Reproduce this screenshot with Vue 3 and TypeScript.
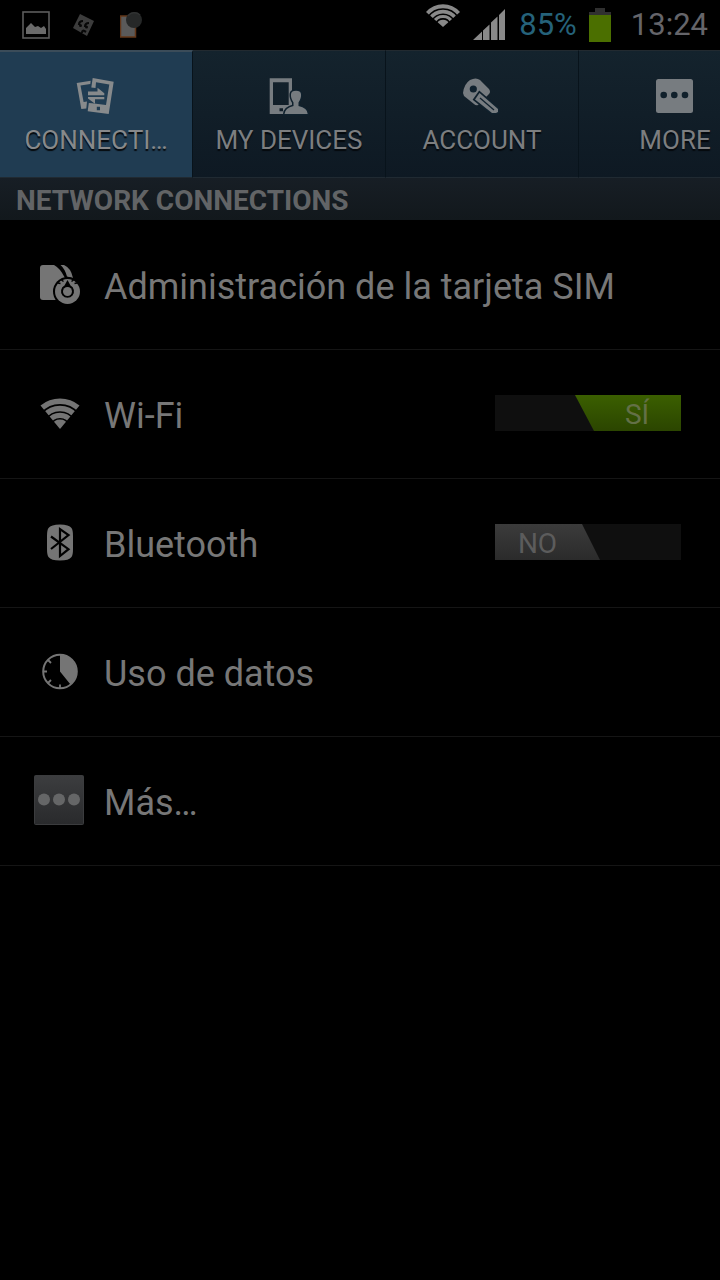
<script setup lang="ts">
import { ref } from 'vue'

type Icon = 'sim' | 'wifi' | 'bluetooth' | 'data' | 'more'
interface Setting {
  icon: Icon
  label: string
  toggle?: boolean
}

const tabs = [
  { id: 'connections', label: 'CONNECTI…' },
  { id: 'devices', label: 'MY DEVICES' },
  { id: 'account', label: 'ACCOUNT' },
  { id: 'more', label: 'MORE' },
]
const active = ref('connections')

const settings = ref<Setting[]>([
  { icon: 'sim', label: 'Administración de la tarjeta SIM' },
  { icon: 'wifi', label: 'Wi-Fi', toggle: true },
  { icon: 'bluetooth', label: 'Bluetooth', toggle: false },
  { icon: 'data', label: 'Uso de datos' },
  { icon: 'more', label: 'Más…' },
])
</script>

<template>
  <div class="screen">
    <header class="status">
      <div class="notes">
        <svg width="28" height="28" viewBox="0 0 28 28">
          <rect x="1" y="1" width="26" height="26" fill="none" stroke="#5c5c5c" stroke-width="1.6" />
          <path d="M4 23V17L9 12L13 16L16 15L19 17L22 15L24 18V23Z" fill="#6a6a6a" />
        </svg>
        <svg width="24" height="24" viewBox="0 0 24 24">
          <path d="M7 1L21 8L14 23L0 15Z" fill="#3c3c3c" />
          <path d="M10 8Q6 8 6 12M16 10Q12 10 12 14M9 20Q9 16 13 19" fill="none" stroke="#080808" stroke-width="2.2" />
          <circle cx="7.500" cy="12.500" r="1.500" fill="#080808" />
          <circle cx="13.500" cy="14" r="1.500" fill="#080808" />
        </svg>
        <svg width="24" height="28" viewBox="0 0 24 28">
          <rect x="0.500" y="5" width="15" height="21" fill="#5a5a5a" stroke="#633719" stroke-width="1.500" />
          <circle cx="14" cy="9" r="8" fill="#262828" />
          <path d="M8 5A8 8 0 0 1 20 4" fill="none" stroke="#303232" stroke-width="1.500" />
        </svg>
      </div>
      <svg class="status-wifi" width="36" height="24" viewBox="0 0 36 24">
        <path d="M18 23L1 8A22.600 22.600 0 0 1 35 8Z" fill="#898989" />
        <path d="M3 13A18 18 0 0 1 33 13M7 16.500A12.800 12.800 0 0 1 29 16.500M11 19.500A7.600 7.600 0 0 1 25 19.500" fill="none" stroke="#000" stroke-width="1.600" />
      </svg>
      <svg class="signal" width="33" height="32" viewBox="0 0 33 32">
        <path d="M0 31L9 22.500V31ZM10 31V21.500L16.500 15.500V31ZM18 31V13.500L24.500 7.500V31ZM26 31V6L32 0V31Z" fill="#898989" />
      </svg>
      <span class="percent">85%</span>
      <svg class="battery" width="24" height="36" viewBox="0 0 24 36">
        <path d="M7 1H17V5H23V9H1V5H7Z" fill="#303030" />
        <rect x="1" y="8" width="22" height="27" fill="#4b6f00" />
      </svg>
      <time>13:24</time>
    </header>

    <nav class="tabs" aria-label="Settings sections">
      <button
        v-for="tab in tabs"
        :key="tab.id"
        type="button"
        class="tab"
        :class="{ active: active === tab.id }"
        @click="active = tab.id"
      >
        <svg width="42" height="40" viewBox="0 0 42 40" aria-hidden="true">
          <template v-if="tab.id === 'connections'">
            <path d="M1.700 7L15.700 4.700L15.300 8L5.500 9.600L8.600 26L12 25.400L11.300 32.500L6.300 33Z" fill="#878a8c" />
            <path fill-rule="evenodd" d="M17.700 2L38.700 5.700L33.700 38L12.700 35.300L13.800 27L17 27.300L31 29L34.300 8.500L21 6.300L20.500 12L16.300 11.500ZM21.800 30.800V34.200H25V30.800Z" fill="#878a8c" />
            <path d="M13 15.500H22.500V11.700L29.300 17.300V19.200H13ZM13 21H29.300V23.300H20V27.700L13 22.500Z" fill="#878a8c" />
          </template>
          <template v-else-if="tab.id === 'devices'">
            <path fill-rule="evenodd" d="M1.700 2.300H24V38H1.700ZM5 6.300V29H20.700V6.300ZM11.500 32.200V35.200H15V32.200Z" fill="#777c80" />
            <path d="M25.500 26.500Q22.500 22 23 18Q23.500 14.700 28 14.700Q32.500 14.700 33 18Q33.500 22 30.500 26.500V30Q39.500 32 39.700 38H16.500Q17 32 25.500 30Z" fill="#777c80" stroke="#10212d" stroke-width="3" paint-order="stroke" />
          </template>
          <template v-else-if="tab.id === 'account'">
            <path d="M2 17Q3 8 9 4Q15 1 19 4L28 13Q30 16 28 18L17 29Q15 30 13 28L3 20Z" fill="#777c80" />
            <circle cx="12.300" cy="13" r="3.600" fill="#10212d" />
            <path d="M18.500 17L37 33V36L35 37H31L14 23.500Z" fill="#777c80" stroke="#10212d" stroke-width="3.500" paint-order="stroke" />
            <path d="M19 22L33 34" stroke="#10212d" stroke-width="1.300" />
          </template>
          <template v-else>
            <rect x="2" y="3" width="37" height="34" rx="2.500" fill="#777c80" />
            <g fill="#10202b"><circle cx="9.700" cy="19" r="3.300" /><circle cx="20.300" cy="19" r="3.300" /><circle cx="31" cy="19" r="3.300" /></g>
          </template>
        </svg>
        <span>{{ tab.label }}</span>
      </button>
    </nav>

    <main>
      <h2>NETWORK CONNECTIONS</h2>
      <ul>
        <li v-for="item in settings" :key="item.icon">
          <svg class="icon" width="52" height="52" viewBox="0 0 52 52" aria-hidden="true">
            <g v-if="item.icon === 'sim'" fill="#757575">
              <path d="M6 10Q6 7 9 7H20Q26 10 31 20V42H9Q6 42 6 39Z" />
              <path d="M26.500 7H30Q37 10 39 20L33 18.500Q31 11 26.500 7Z" />
              <circle cx="33.500" cy="33.500" r="14.500" fill="#000" />
              <circle cx="33.500" cy="33.500" r="12.500" />
              <path d="M24 25L26.500 25.500M27.500 22L29.500 23.500M39.500 22L37.500 23.500M43 25L40.500 25.500" fill="none" stroke="#000" stroke-width="1.500" />
              <path d="M33.500 22L36.500 27.600A6.500 6.500 0 1 1 30.500 27.600Z" fill="#000" />
              <circle cx="33.500" cy="33.500" r="4.500" />
            </g>
            <g v-else-if="item.icon === 'wifi'">
              <path d="M26 42L6.500 18.500A30.700 30.700 0 0 1 45.500 18.500Z" fill="#757575" />
              <path d="M8 26A24 24 0 0 1 44 26M12 32.500A16.800 16.800 0 0 1 40 32.500M17 38A9.600 9.600 0 0 1 35 38" fill="none" stroke="#000" stroke-width="1.600" />
            </g>
            <g v-else-if="item.icon === 'bluetooth'">
              <path d="M26 8.500Q35 8.500 37.500 12Q39 14 39 20V33Q39 39 37.500 41Q35 44.500 26 44.500Q17 44.500 14.500 41Q13 39 13 33V20Q13 14 14.500 12Q17 8.500 26 8.500Z" fill="#757575" />
              <path d="M17 20.500L34.500 33.200L26 40V13.200L34.500 19L17 33" fill="none" stroke="#000" stroke-width="2.200" />
            </g>
            <g v-else-if="item.icon === 'data'">
              <circle cx="26" cy="26.500" r="16.800" fill="none" stroke="#757575" stroke-width="2" />
              <path d="M26 26.500V9.500A17 17 0 0 1 36.500 39.500Z" fill="#757575" />
              <path d="M9 26.500H13M26 43.500V39.500M14 15L17 18M14 38L17 35" stroke="#757575" stroke-width="1.800" />
            </g>
            <g v-else>
              <defs>
                <linearGradient id="more-fill" x1="0" y1="0" x2="0" y2="1">
                  <stop offset="0" stop-color="#3c3d3f" /><stop offset="1" stop-color="#292a2c" />
                </linearGradient>
              </defs>
              <rect x="0.500" y="1.500" width="49" height="49" rx="1" fill="url(#more-fill)" stroke="#3b3c3e" />
              <g fill="#656667"><circle cx="10" cy="25.500" r="6" /><circle cx="25" cy="25.500" r="6" /><circle cx="40" cy="25.500" r="6" /></g>
            </g>
          </svg>
          <template v-if="item.toggle !== undefined">
            <label class="name" :for="item.icon">{{ item.label }}</label>
            <span class="switch" :class="{ on: item.toggle }">
              <input :id="item.icon" v-model="item.toggle" type="checkbox" role="switch" />
              <span class="knob" aria-hidden="true">{{ item.toggle ? 'SÍ' : 'NO' }}</span>
            </span>
          </template>
          <button v-else type="button" class="name">{{ item.label }}</button>
        </li>
      </ul>
    </main>
  </div>
</template>

<style>
body {
  margin: 0;
  background: #000;
}
</style>

<style scoped>
.screen {
  min-height: 100vh;
  background: #000;
  color: #777;
  font-family: Roboto, "Noto Sans", sans-serif;
  overflow: hidden;
}
svg {
  display: block;
  flex: none;
}
button {
  border: 0;
  background: none;
  color: inherit;
  font: inherit;
  cursor: pointer;
}
.status {
  display: flex;
  align-items: center;
  height: 50px;
  padding: 0 12px 0 22px;
  box-sizing: border-box;
  font-size: 31px;
  line-height: 52px;
}
.notes {
  display: flex;
  align-items: center;
  gap: 23px;
  margin-right: auto;
}
.status-wifi {
  margin: 0 12px 18px 0;
}
.signal {
  margin-right: 13px;
}
.percent {
  color: #25627a;
}
.battery {
  margin: 0 19px 0 11px;
}
time {
  color: #65656a;
}
.tabs {
  display: flex;
  overflow: hidden;
}
.tab {
  display: flex;
  flex: 0 0 193px;
  flex-direction: column;
  align-items: center;
  gap: 8px;
  height: 128px;
  padding: 25px 0 0;
  box-sizing: border-box;
  border-top: 1px solid #222a30;
  border-right: 1px solid #08131b;
  border-bottom: 1px solid #202a32;
  background: linear-gradient(#14232d, #0e1923);
  color: #7c7e80;
  font-size: 26px;
  line-height: 32px;
  text-shadow: 0 2px 1px #05090d;
  white-space: nowrap;
}
.tab.active {
  border-top: 2px solid #3b4c59;
  padding-top: 24px;
  background: #203c52;
  color: #87898b;
}
h2 {
  height: 42px;
  margin: 0 0 1px;
  padding: 2px 16px 0;
  box-sizing: border-box;
  background: linear-gradient(#171e25, #12181c);
  color: #626466;
  font-size: 28px;
  font-weight: 700;
  line-height: 42px;
}
ul {
  margin: 0;
  padding: 0;
  list-style: none;
}
li {
  display: flex;
  align-items: center;
  height: 129px;
  padding: 0 39px 2px 34px;
  box-sizing: border-box;
  border-bottom: 1px solid #151515;
}
.name {
  flex: 1;
  padding: 6px 0 0 18px;
  font-size: 36px;
  line-height: 48px;
  text-align: left;
  white-space: nowrap;
}
.switch {
  position: relative;
  display: flex;
  width: 186px;
  height: 36px;
  background: #0f0f0f;
}
.switch input {
  position: absolute;
  inset: 0;
  width: 100%;
  height: 100%;
  margin: 0;
  opacity: 0;
  cursor: pointer;
}
.knob {
  width: 105px;
  padding-right: 20px;
  box-sizing: border-box;
  background: linear-gradient(#3b3b3b, #2b2b2b);
  clip-path: polygon(0 0, 87px 0, 100% 100%, 0 100%);
  color: #5c5c5c;
  font-size: 28px;
  line-height: 39px;
  text-align: center;
  pointer-events: none;
}
.on .knob {
  width: 106px;
  margin-left: auto;
  padding: 0 0 0 18px;
  background: linear-gradient(#3b5f00, #2b4500);
  clip-path: polygon(0 0, 100% 0, 100% 100%, 19px 100%);
  color: #637047;
}
</style>
